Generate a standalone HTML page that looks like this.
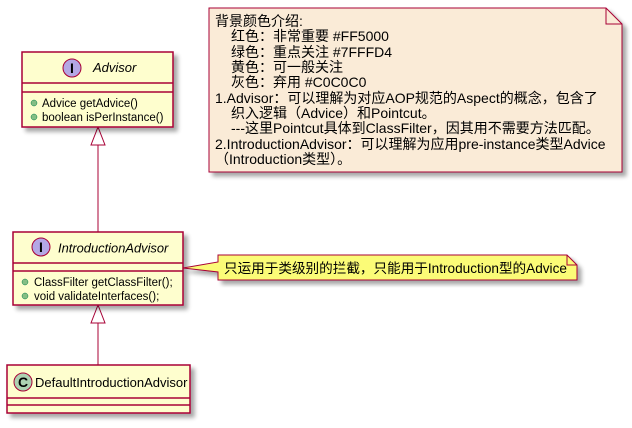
<!DOCTYPE html>
<html><head><meta charset="utf-8"><style>
body{margin:0;background:#fff;width:632px;height:423px;overflow:hidden}
svg text{font-family:"Liberation Sans","Noto Sans CJK SC",sans-serif}
</style></head><body>
<svg width="632" height="423" xmlns="http://www.w3.org/2000/svg">
<defs><filter id="sh" x="-10%" y="-10%" width="130%" height="140%"><feGaussianBlur in="SourceAlpha" stdDeviation="2"/><feOffset dx="4" dy="4"/><feComponentTransfer><feFuncA type="linear" slope="0.35"/></feComponentTransfer><feMerge><feMergeNode/><feMergeNode in="SourceGraphic"/></feMerge></filter></defs>
<path d="M209,8 L606,8 L622,24 L622,172 L209,172 Z" fill="#FAEBD7" stroke="#A80036" stroke-width="1" filter="url(#sh)"/>
<path d="M606,8 L606,24 L622,24" fill="none" stroke="#A80036"/>
<g font-size="14" fill="#000">
<text x="215" y="26">背景颜色介绍:</text>
<text x="231" y="41">红色：非常重要 #FF5000</text>
<text x="231" y="57">绿色：重点关注 #7FFFD4</text>
<text x="231" y="72">黄色：可一般关注</text>
<text x="231" y="87">灰色：弃用 #C0C0C0</text>
<text x="215" y="103">1.Advisor：可以理解为对应AOP规范的Aspect的概念，包含了</text>
<text x="231" y="118">织入逻辑（Advice）和Pointcut。</text>
<text x="231" y="133">---这里Pointcut具体到ClassFilter，因其用不需要方法匹配。</text>
<text x="215" y="149">2.IntroductionAdvisor：可以理解为应用pre-instance类型Advice</text>
<text x="215" y="164">（Introduction类型）。</text>
</g>
<line x1="98" y1="145" x2="98" y2="232" stroke="#A80036"/>
<path d="M98,127 L91,145 L105,145 Z" fill="#fff" stroke="#A80036"/>
<line x1="98" y1="323" x2="98" y2="365" stroke="#A80036"/>
<path d="M98,305 L91,323 L105,323 Z" fill="#fff" stroke="#A80036"/>
<g filter="url(#sh)"><rect x="22" y="52" width="151" height="75" fill="#FEFECE" stroke="#A80036" stroke-width="1.5"/></g>
<line x1="22" y1="83" x2="173" y2="83" stroke="#A80036" stroke-width="1.5"/>
<line x1="22" y1="92" x2="173" y2="92" stroke="#A80036" stroke-width="1.5"/>
<circle cx="72" cy="68" r="9" fill="#B4A7E5" stroke="#A80036"/>
<text x="72" y="73" font-size="14" font-weight="bold" text-anchor="middle" font-family="Liberation Serif">I</text>
<text x="93" y="72" font-size="13" font-style="italic">Advisor</text>
<g font-size="11.5"><circle cx="34" cy="103" r="3" fill="#84BE84" stroke="#038048" stroke-width="0.5"/><text x="42" y="107">Advice getAdvice()</text>
<circle cx="34" cy="117" r="3" fill="#84BE84" stroke="#038048" stroke-width="0.5"/><text x="42" y="121">boolean isPerInstance()</text></g>
<g filter="url(#sh)"><rect x="13" y="232" width="170" height="73" fill="#FEFECE" stroke="#A80036" stroke-width="1.5"/></g>
<line x1="13" y1="263" x2="183" y2="263" stroke="#A80036" stroke-width="1.5"/>
<line x1="13" y1="271" x2="183" y2="271" stroke="#A80036" stroke-width="1.5"/>
<circle cx="41" cy="247" r="9" fill="#B4A7E5" stroke="#A80036"/>
<text x="41" y="252" font-size="14" font-weight="bold" text-anchor="middle" font-family="Liberation Serif">I</text>
<text x="58" y="252.5" font-size="12.9" font-style="italic">IntroductionAdvisor</text>
<g font-size="11.5"><circle cx="25" cy="282" r="3" fill="#84BE84" stroke="#038048" stroke-width="0.5"/><text x="34" y="286">ClassFilter getClassFilter();</text>
<circle cx="25" cy="296" r="3" fill="#84BE84" stroke="#038048" stroke-width="0.5"/><text x="34" y="300">void validateInterfaces();</text></g>
<path d="M218,255 L567,255 L577,265 L577,280 L218,280 L218,272 L183,268 L218,262 Z" fill="#FBFB77" stroke="#A80036" filter="url(#sh)"/>
<path d="M567,255 L567,265 L577,265" fill="none" stroke="#A80036"/>
<text x="224" y="273" font-size="13.6">只运用于类级别的拦截，只能用于Introduction型的Advice</text>
<g filter="url(#sh)"><rect x="7" y="365" width="183" height="48" fill="#FEFECE" stroke="#A80036" stroke-width="1.5"/></g>
<line x1="7" y1="398" x2="190" y2="398" stroke="#A80036" stroke-width="1.5"/>
<line x1="7" y1="405" x2="190" y2="405" stroke="#A80036" stroke-width="1.5"/>
<circle cx="23" cy="382" r="9" fill="#ADD1B2" stroke="#A80036"/>
<text x="23" y="387" font-size="14" font-weight="bold" text-anchor="middle">C</text>
<text x="35" y="387" font-size="13">DefaultIntroductionAdvisor</text>
</svg>
</body></html>
